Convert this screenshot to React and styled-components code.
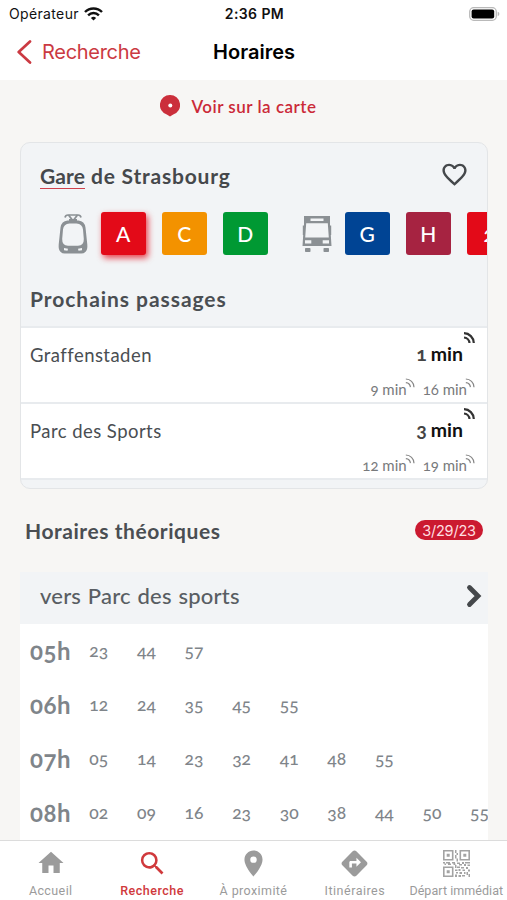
import styled, { createGlobalStyle } from 'styled-components';
import { MdHome, MdSearch, MdPlace, MdDirections, MdFavoriteBorder } from 'react-icons/md';

const GlobalStyle = createGlobalStyle`
  * {
    box-sizing: border-box;
  }

  body {
    margin: 0;
    background: #f7f6f4;
  }

  h1, h2, h3, p {
    margin: 0;
  }

  svg {
    display: block;
    flex-shrink: 0;
  }
`;

const Screen = styled.div`
  display: flex;
  flex-direction: column;
  width: 507px;
  height: 900px;
  overflow: hidden;
  background: #f7f6f4;
  color: #4a4e52;
  font-family: Lato, sans-serif;
  font-variant-numeric: oldstyle-nums;
  white-space: nowrap;
`;

const StatusBar = styled.div`
  display: grid;
  grid-template-columns: 1fr auto 1fr;
  align-items: center;
  flex-shrink: 0;
  height: 28px;
  padding: 0 7px 1px 9px;
  background: #fff;
  color: #111;
  font-family: Inter, sans-serif;
  font-variant-numeric: normal;
  font-size: 14px;
`;

const Carrier = styled.div`
  display: flex;
  align-items: center;
  gap: 5px;
  letter-spacing: 0.35px;
`;

const Clock = styled.div`
  font-weight: 600;
  letter-spacing: 0.4px;
`;

const Battery = styled.div`
  display: flex;
  justify-content: flex-end;
`;

const NavBar = styled.div`
  display: grid;
  grid-template-columns: 1fr auto 1fr;
  align-items: center;
  flex-shrink: 0;
  height: 52px;
  padding: 0 15px 4px 16px;
  background: #fff;
  font-family: Inter, sans-serif;
`;

const BackButton = styled.button`
  display: flex;
  align-items: center;
  gap: 10px;
  padding: 0;
  border: none;
  background: none;
  color: #cb3a42;
  font: 400 20px Inter, sans-serif;
  letter-spacing: -0.3px;
`;

const NavTitle = styled.h1`
  color: #000;
  font-size: 20px;
  font-weight: 600;
  letter-spacing: 0;
`;

const MapLink = styled.div`
  display: flex;
  align-items: center;
  justify-content: center;
  flex-shrink: 0;
  gap: 11px;
  height: 62px;
  padding: 0 30px 10px 0;
  color: #cb2a38;
  font-size: 17px;
  font-weight: 600;
  letter-spacing: 0.5px;
`;

const Card = styled.section`
  flex-shrink: 0;
  height: 347px;
  margin: 0 19px 0 20px;
  border: 1px solid #e3e5e7;
  border-radius: 10px;
  background: #f2f4f6;
  overflow: hidden;
`;

const CardHead = styled.div`
  display: flex;
  align-items: center;
  justify-content: space-between;
  height: 63px;
  padding: 0 18px 0 19px;
  color: #45484b;
`;

const StopName = styled.h2`
  padding-top: 2px;
  font-size: 21px;
  font-weight: 700;
  letter-spacing: 0.8px;
`;

const Underlined = styled.span`
  display: inline-block;
  line-height: 25px;
  border-bottom: 1px solid #d0414b;
  letter-spacing: 0.1px;
`;

const Lines = styled.div`
  display: flex;
  align-items: center;
  height: 58px;
  padding: 0 0 3px 36px;
`;

const LineBadge = styled.div`
  display: flex;
  align-items: center;
  justify-content: center;
  flex-shrink: 0;
  width: 44.5px;
  height: 43px;
  margin-right: 16.5px;
  padding-bottom: 1px;
  border-radius: 3px;
  background: ${props => props.$color};
  box-shadow: ${props => (props.$active ? '2px 3px 6px rgba(226, 6, 19, 0.75)' : 'none')};
  color: #fff;
  font-size: 21px;
  font-weight: 500;
`;

const ModeIcon = styled.div`
  flex-shrink: 0;
  margin-left: ${props => props.$offset || 0}px;
  margin-right: 13px;
`;

const SubTitle = styled.h3`
  display: flex;
  align-items: center;
  height: 62px;
  padding: 7px 9px 0;
  font-size: 21px;
  font-weight: 700;
  letter-spacing: 0.95px;
`;

const Passage = styled.div`
  display: flex;
  flex-direction: column;
  height: 76px;
  padding: 3px 12px 0 9px;
  border-top: 2px solid #e8ebee;
  background: #fff;
`;

const PassageMain = styled.div`
  display: flex;
  align-items: center;
  justify-content: space-between;
  height: 48px;
`;

const Destination = styled.span`
  font-size: 18.5px;
  letter-spacing: 0.45px;
`;

const NextTime = styled.span`
  display: flex;
  align-items: center;
  gap: 4px;
  height: 24px;
  margin-bottom: 4px;
  color: #111;
  font-size: 19.5px;
  font-weight: 700;
`;

const NextValue = styled.span`
  color: #444;
`;

const LaterTimes = styled.div`
  display: flex;
  justify-content: flex-end;
  gap: 8px;
  color: #787a7c;
`;

const LaterTime = styled.span`
  display: flex;
  font-size: 15px;
  line-height: 21px;
`;

const SignalLift = styled.span`
  align-self: flex-start;
  margin-top: ${props => props.$lift}px;
  margin-left: ${props => props.$shift || 0}px;
`;

const CardFoot = styled.div`
  height: 12px;
  border-top: 2px solid #e8ebee;
`;

const TheoreticalHead = styled.div`
  display: flex;
  align-items: center;
  justify-content: space-between;
  flex-shrink: 0;
  height: 83px;
  padding: 0 24px 1px 25px;
`;

const SectionTitle = styled.h2`
  font-size: 21px;
  font-weight: 700;
  letter-spacing: 0.55px;
`;

const DatePill = styled.span`
  display: flex;
  align-items: center;
  justify-content: center;
  width: 68px;
  height: 20px;
  border-radius: 10px;
  background: #cb1a30;
  color: #ffdfe1;
  font-family: Inter, sans-serif;
  font-variant-numeric: normal;
  font-size: 14.5px;
  letter-spacing: -0.2px;
`;

const Direction = styled.div`
  display: flex;
  align-items: center;
  justify-content: space-between;
  flex-shrink: 0;
  height: 52px;
  margin: 0 19px 0 20px;
  padding: 0 5px 5px 20px;
  background: #f2f4f6;
  color: #595e63;
  font-size: 22px;
  font-weight: 500;
  letter-spacing: 0.2px;
  word-spacing: 1px;
`;

const Timetable = styled.div`
  flex: 1;
  min-height: 0;
  margin: 0 19px 0 20px;
  background: #fff;
  overflow: hidden;
`;

const HourRow = styled.div`
  display: flex;
  align-items: center;
  height: 53.8px;
  padding-left: 10px;
  color: #7f858a;
`;

const Hour = styled.span`
  flex-shrink: 0;
  width: 45px;
  font-size: 24px;
  font-weight: 700;
  letter-spacing: 0.6px;
`;

const Minute = styled.span`
  flex-shrink: 0;
  width: 47.6px;
  font-size: 17.5px;
  font-weight: 500;
  text-align: center;
`;

const TabBar = styled.nav`
  display: grid;
  grid-template-columns: repeat(5, 1fr);
  flex-shrink: 0;
  height: 60px;
  border-top: 1px solid #dcdcdc;
  background: #fff;
`;

const Tab = styled.div`
  display: flex;
  flex-direction: column;
  align-items: center;
  color: ${props => (props.$active ? '#d0393c' : '#9b9b9b')};
  font: ${props => (props.$active ? 500 : 400)} 12.5px Roboto, sans-serif;
  letter-spacing: ${props => props.$spacing}px;
`;

const TabIcon = styled.div`
  display: flex;
  align-items: center;
  height: 42px;
  padding-top: 2px;
`;

const WifiIcon = () => (
  <svg width="19" height="14" viewBox="0 0 19 14" fill="none" stroke="#111" strokeWidth="2.4">
    <path d="M1 5a12 12 0 0 1 17 0" />
    <path d="M4.1 8.3a7.6 7.6 0 0 1 10.8 0" />
    <path d="M6.9 10.9a3.8 3.8 0 0 1 5.2 0L9.5 13.6z" fill="#111" stroke="none" />
  </svg>
);

const BatteryIcon = () => (
  <svg width="31" height="14" viewBox="0 0 31 14">
    <rect x="0.7" y="0.7" width="26.6" height="12.6" rx="4" fill="none" stroke="#b9b9b9" strokeWidth="1.3" />
    <rect x="2.6" y="2.4" width="22.6" height="9.2" rx="2" fill="#000" />
    <path d="M28.7 4.8q1.7.6 1.7 2.2t-1.7 2.2z" fill="#b9b9b9" />
  </svg>
);

const BackIcon = () => (
  <svg width="16" height="24" viewBox="0 0 16 24" fill="none" stroke="#cb3a42" strokeWidth="2.7">
    <path d="M14 1.5 2.7 12 14 22.5" strokeLinecap="round" strokeLinejoin="round" />
  </svg>
);

const MarkerIcon = () => (
  <svg width="20" height="22" viewBox="0 0 20 22">
    <path d="M10 0a10 10 0 0 1 3.2 19.5L10 21.4l-3.2-1.9A10 10 0 0 1 10 0z" fill="#cb2f3b" />
    <circle cx="10.3" cy="10.4" r="2" fill="#fff" />
  </svg>
);

const TramIcon = () => (
  <svg width="30" height="41" viewBox="0 0 30 41" fill="#8b9094">
    <path d="M7 4.5Q7.5 2 10 2h10q2.500 0 3 2.500" fill="none" stroke="#8b9094" strokeWidth="1.7" />
    <path d="M10.500 2 14 6.500M19.500 2 16 6.500" stroke="#8b9094" strokeWidth="1.8" />
    <rect x="11" y="6" width="8" height="3" />
    <path
      fillRule="evenodd"
      d="M9.500 7.500h11q6 .5 7 7l1.800 17q.5 5.500-2 7.500-1.500 1.500-4 1.500H6.700q-2.500 0-4-1.500-2.500-2-2-7.500l1.800-17q1-6.500 7-7zM11.500 10.500h7q5.800.3 6.500 6l.8 9.500q.2 6.500-5.800 6.800H10q-6-.3-5.800-6.800L5 16.500q.7-5.700 6.500-6z"
    />
    <path d="m6 35 4 .7-.5 2-3.500-.4zM24 35l-4 .7.500 2 3.500-.4z" fill="#f2f4f6" />
  </svg>
);

const BusIcon = () => (
  <svg width="30" height="38" viewBox="0 0 30 38" fill="#8b9094">
    <path
      fillRule="evenodd"
      d="M2 1h26v9.5h1.200V20H28.800l.7 11H.5l.7-11H.8v-9.5H2zM8.500 3.500h13V6h-13zM4.200 8.300h21.600L26.800 22.500H3.200zM3 25.200h6.300v3.200H3zM20.700 25.200H27v3.200h-6.300z"
    />
    <rect x="3" y="33" width="5.5" height="4" rx="0.8" />
    <rect x="21.5" y="33" width="5.5" height="4" rx="0.8" />
  </svg>
);

const SignalIcon = ({ size, color, weight }) => (
  <svg width={size} height={size} viewBox="0 0 12 12" fill="none" stroke={color} strokeWidth={weight}>
    <path d="M1 1.2A10 10 0 0 1 10.800 11" />
    <path d="M1 5.500A6 6 0 0 1 6.500 11" />
  </svg>
);

const ArrowIcon = () => (
  <svg width="18" height="24" viewBox="0 0 18 24" fill="none" stroke="#45484b" strokeWidth="4.8">
    <path d="m4.500 3.500 8.500 8.500-8.500 8.500" strokeLinecap="round" strokeLinejoin="miter" />
  </svg>
);

const QrIcon = () => (
  <svg width="27" height="27" viewBox="0 0 27 27" fill="#a3a3a3">
    <path
      fillRule="evenodd"
      d="M0 0h10.500v10.500H0zM1.600 1.600v7.300h7.300V1.600zM16.500 0H27v10.500H16.500zM18.100 1.600v7.300h7.300V1.600zM0 16.500h10.500V27H0zM1.600 18.100v7.300h7.300v-7.300z"
    />
    <path d="M3.700 3.700h3v3h-3zM20.300 3.700h3v3h-3zM3.700 20.300h3v3h-3z" />
    <path d="M12 0h1.500v3H12zM13.500 3H15v2h-1.500zM12 5h1.500v3.500H12zM13.500 8.500H15v3h-1.500zM0 12h2v1.500H0zM3 12h4v1.500H3zM5 13.500h3V15H5zM1.500 13.500H3V15H1.500zM9 12h3v1.500H9zM10.500 13.500h2V15h-2zM12 15h1.500v3H12zM14 12.500h3V14h-3zM16 14h3v1.500h-3zM19 12h2v2h-2zM22 12h5v1.500h-5zM21 14h2v2h-2zM24.500 14.500H27V16h-2.500zM14 16.500h3V18h-3zM18 17h3v1.500h-3zM23 17h2v2h-2zM12 19.500h2.500V21H12zM15.500 19h2v2h-2zM19.500 19.500H22V21h-2.500zM25 19.500h2v2h-2zM13 22h2v1.500h-2zM16.500 22h2.500v2h-2.500zM21 22h1.500v2H21zM23.500 22H25v3h-1.500zM12 24.500h2V27h-2zM15.500 25H18v2h-2.500zM19 25h3v1.500h-3zM25.500 24H27v3h-1.500z" />
  </svg>
);

const tramLines = [
  { name: 'A', color: '#e30a18', active: true },
  { name: 'C', color: '#f39200' },
  { name: 'D', color: '#009933' },
];

const busLines = [
  { name: 'G', color: '#004494' },
  { name: 'H', color: '#a62341' },
  { name: '2', color: '#e30a18' },
];

const passages = [
  { to: 'Graffenstaden', next: 1, later: ['9 min', '16 min'] },
  { to: 'Parc des Sports', next: 3, later: ['12 min', '19 min'] },
];

const timetable = [
  { hour: '05h', minutes: ['23', '44', '57'] },
  { hour: '06h', minutes: ['12', '24', '35', '45', '55'] },
  { hour: '07h', minutes: ['05', '14', '23', '32', '41', '48', '55'] },
  { hour: '08h', minutes: ['02', '09', '16', '23', '30', '38', '44', '50', '55'] },
];

const tabs = [
  { label: 'Accueil', spacing: 0.4, icon: <MdHome size={30} /> },
  { label: 'Recherche', spacing: 0.5, icon: <MdSearch size={31} />, active: true },
  { label: 'À proximité', spacing: 0.4, icon: <MdPlace size={31} /> },
  { label: 'Itinéraires', spacing: 0.5, icon: <MdDirections size={31} /> },
  { label: 'Départ immédiat', spacing: 0.05, icon: <QrIcon /> },
];

const App = () => {
  return (
    <Screen>
      <GlobalStyle />
      <StatusBar>
        <Carrier>
          Opérateur
          <WifiIcon />
        </Carrier>
        <Clock>2:36 PM</Clock>
        <Battery>
          <BatteryIcon />
        </Battery>
      </StatusBar>
      <NavBar>
        <BackButton>
          <BackIcon />
          Recherche
        </BackButton>
        <NavTitle>Horaires</NavTitle>
      </NavBar>
      <MapLink>
        <MarkerIcon />
        Voir sur la carte
      </MapLink>
      <Card>
        <CardHead>
          <StopName>
            <Underlined>Gare</Underlined> de Strasbourg
          </StopName>
          <MdFavoriteBorder size={29} />
        </CardHead>
        <Lines>
          <ModeIcon $offset={1}>
            <TramIcon />
          </ModeIcon>
          {tramLines.map(line => (
            <LineBadge key={line.name} $color={line.color} $active={line.active}>
              {line.name}
            </LineBadge>
          ))}
          <ModeIcon $offset={18}>
            <BusIcon />
          </ModeIcon>
          {busLines.map(line => (
            <LineBadge key={line.name} $color={line.color}>
              {line.name}
            </LineBadge>
          ))}
        </Lines>
        <SubTitle>Prochains passages</SubTitle>
        {passages.map(passage => (
          <Passage key={passage.to}>
            <PassageMain>
              <Destination>{passage.to}</Destination>
              <NextTime>
                <NextValue>{passage.next}</NextValue>
                min
                <SignalLift $lift={-9} $shift={-4}>
                  <SignalIcon size={12} color="#333" weight={2.2} />
                </SignalLift>
              </NextTime>
            </PassageMain>
            <LaterTimes>
              {passage.later.map(time => (
                <LaterTime key={time}>
                  {time}
                  <SignalLift $lift={-1} $shift={-2}>
                    <SignalIcon size={10} color="#858585" weight={1.4} />
                  </SignalLift>
                </LaterTime>
              ))}
            </LaterTimes>
          </Passage>
        ))}
        <CardFoot />
      </Card>
      <TheoreticalHead>
        <SectionTitle>Horaires théoriques</SectionTitle>
        <DatePill>3/29/23</DatePill>
      </TheoreticalHead>
      <Direction>
        vers Parc des sports
        <ArrowIcon />
      </Direction>
      <Timetable>
        {timetable.map(row => (
          <HourRow key={row.hour}>
            <Hour>{row.hour}</Hour>
            {row.minutes.map(minute => (
              <Minute key={minute}>{minute}</Minute>
            ))}
          </HourRow>
        ))}
      </Timetable>
      <TabBar>
        {tabs.map(tab => (
          <Tab key={tab.label} $active={tab.active} $spacing={tab.spacing}>
            <TabIcon>{tab.icon}</TabIcon>
            {tab.label}
          </Tab>
        ))}
      </TabBar>
    </Screen>
  );
};

export default App;
